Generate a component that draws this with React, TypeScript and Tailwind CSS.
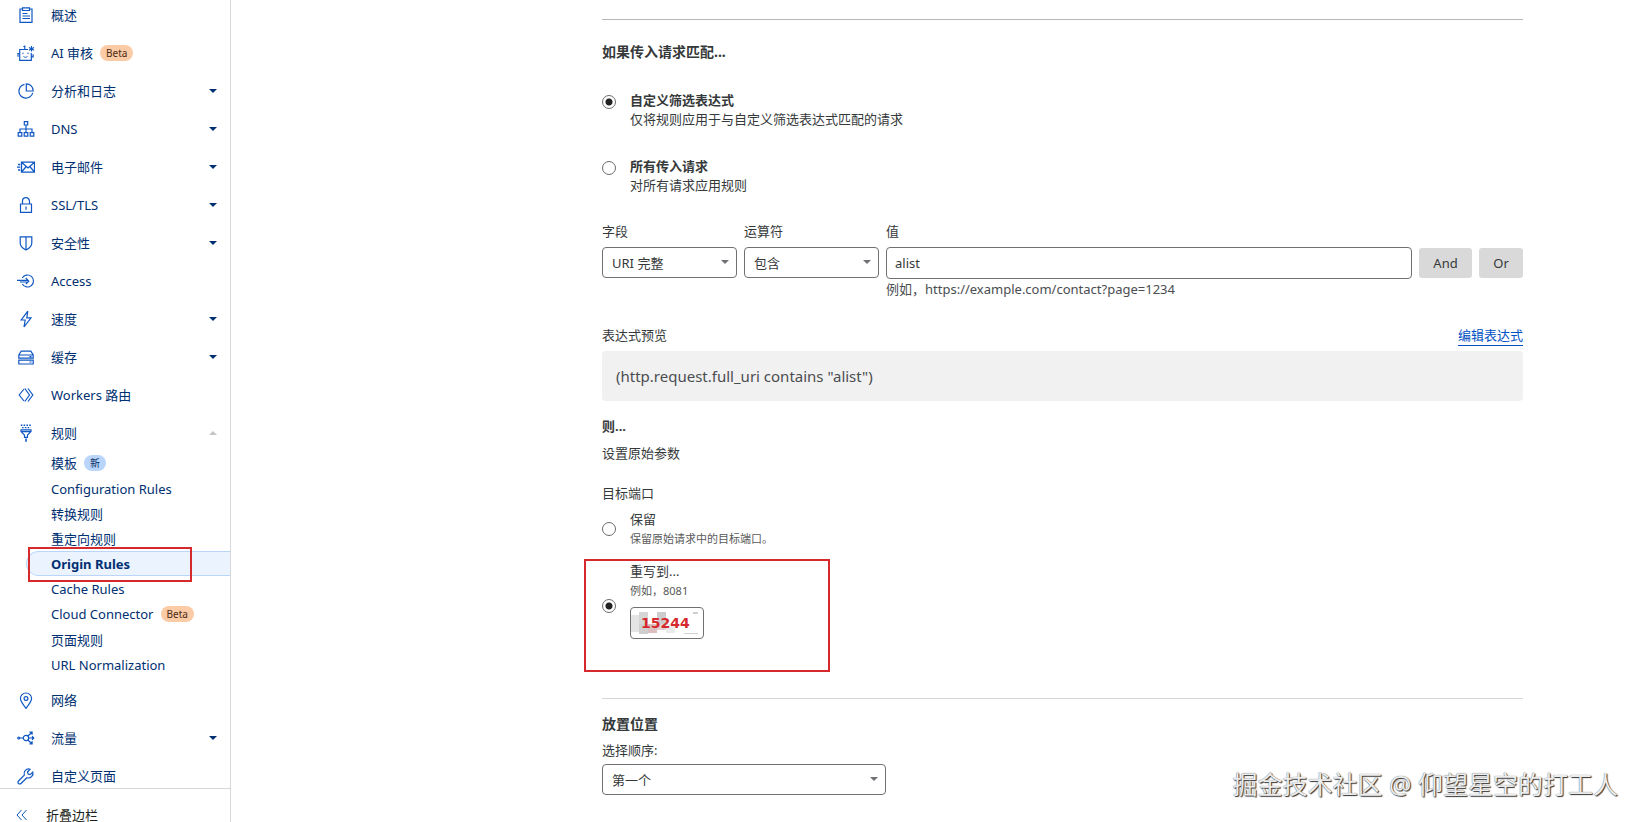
import clsx from "clsx";
import type { ReactNode } from "react";

type NavItem = {
  label: string;
  icon: ReactNode;
  badge?: string;
  caret?: "down" | "up";
};

type SubItem = {
  label: string;
  badge?: { text: string; tone: "orange" | "blue" };
  active?: boolean;
};

function Icon({ children }: { children: ReactNode }) {
  return (
    <svg
      viewBox="0 0 18 18"
      className="size-[18px] shrink-0"
      fill="none"
      stroke="#0f57c2"
      strokeWidth="1.2"
      aria-hidden="true"
    >
      {children}
    </svg>
  );
}

const topItems: NavItem[] = [
  {
    label: "概述",
    icon: (
      <Icon>
        <path d="M5.500 3H3v13.400h12V3h-2.500M5.500 1.800h7v2.700h-7zM5.500 7.500h5M5.500 10h7.500M5.500 12.500h7.500" />
      </Icon>
    ),
  },
  {
    label: "AI 审核",
    badge: "Beta",
    icon: (
      <Icon>
        <path d="M11 5.500H2.700v10.800h11.600V9M2.700 9.500H1v3.300M14.300 12.800h1.800v-2.500M7.800 5.500V1.500M6.300 2.500h1.500" />
        <path d="M6 8.600v1.500M11 8.600v1.500M6.500 12.500c1.200 1 2.800 1 4 0" strokeWidth="1" />
        <path d="M14.500 2v5.600M12 3.400l5 2.800M17 3.400l-5 2.800" strokeWidth="1.100" />
      </Icon>
    ),
  },
  {
    label: "分析和日志",
    caret: "down",
    icon: (
      <Icon>
        <path d="M7.500 2.300A7 7 0 1 0 15.700 10.800" />
        <path d="M9.300 1.800v7.200h6.900a7 7 0 0 0-6.900-7.200z" />
      </Icon>
    ),
  },
  {
    label: "DNS",
    caret: "down",
    icon: (
      <Icon>
        <path d="M7.300 1.600h3.400V5H7.300zM1.200 12.600h3.600v3.600H1.200zM7.200 12.600h3.600v3.600H7.200zM13.200 12.600h3.600v3.600h-3.600zM9 5v7.600M3 12.600V9h12v3.600" />
      </Icon>
    ),
  },
  {
    label: "电子邮件",
    caret: "down",
    icon: (
      <Icon>
        <path
          d="M4.500 4.200h13v10h-13zM4.500 4.200l6.500 5.800 6.500-5.800M4.500 14.200l4.700-5.700M17.500 14.200l-4.700-5.700M1 6.500h2.200M0 9.200h3.200M1 12h2.200"
          strokeWidth="1.300"
        />
      </Icon>
    ),
  },
  {
    label: "SSL/TLS",
    caret: "down",
    icon: (
      <Icon>
        <path d="M3.500 8h11v8.400h-11zM5.500 8V5.200a3.500 3.500 0 0 1 7 0V8M9 10.500v3.300" />
      </Icon>
    ),
  },
  {
    label: "安全性",
    caret: "down",
    icon: (
      <Icon>
        <path d="M3.200 2.800h11.600v6c0 3.600-3 6-5.800 7.200-2.800-1.200-5.800-3.600-5.800-7.200zM9 2.800V16" />
      </Icon>
    ),
  },
  {
    label: "Access",
    icon: (
      <Icon>
        <path d="M5.300 6A6 6 0 1 1 5.300 12M0 8.300h11M3 10h8M8.800 6L11.800 9.200l-3 3" />
      </Icon>
    ),
  },
  {
    label: "速度",
    caret: "down",
    icon: (
      <Icon>
        <path d="M10.800 1.200L4.200 10h4l-1.200 7 7-9.200H9.800z" />
      </Icon>
    ),
  },
  {
    label: "缓存",
    caret: "down",
    icon: (
      <Icon>
        <path d="M1.800 7L4.200 3.200h9.600L16.200 7v3.200H1.800zM1.800 7h14.400M1.800 12.200h14.400v3.800H1.800zM12.500 14h2M12.500 8.600h2" />
      </Icon>
    ),
  },
  {
    label: "Workers 路由",
    icon: (
      <Icon>
        <path d="M7 3L2.200 9 7 15M7.800 2.500L12.500 9l-4.700 6.500M11 2.500L15.800 9 11 15.500" />
      </Icon>
    ),
  },
  {
    label: "规则",
    caret: "up",
    icon: (
      <Icon>
        <path d="M3.800 1.300h11M5 3.600h8.500" strokeDasharray="1.600 1.200" strokeWidth="1.400" />
        <path d="M4 5.800h10v1.800L10.500 11v2.300h-3V11L4 7.600zM4 7.600h10" />
        <path d="M9 14.500v3.200" strokeWidth="1.600" />
      </Icon>
    ),
  },
];

const subItems: SubItem[] = [
  { label: "模板", badge: { text: "新", tone: "blue" } },
  { label: "Configuration Rules" },
  { label: "转换规则" },
  { label: "重定向规则" },
  { label: "Origin Rules", active: true },
  { label: "Cache Rules" },
  { label: "Cloud Connector", badge: { text: "Beta", tone: "orange" } },
  { label: "页面规则" },
  { label: "URL Normalization" },
];

const bottomItems: NavItem[] = [
  {
    label: "网络",
    icon: (
      <Icon>
        <path d="M9 17.300C5.500 13 3.400 10.300 3.400 7.600a5.600 5.600 0 0 1 11.200 0c0 2.700-2.100 5.400-5.600 9.700z" />
        <circle cx="9" cy="7.500" r="1.900" />
      </Icon>
    ),
  },
  {
    label: "流量",
    caret: "down",
    icon: (
      <Icon>
        <circle cx="9" cy="9" r="2.700" />
        <path d="M2 9h4.300M11.700 9H16M10.800 7l4-3.500M10.800 11l4 3.500M12.500 3.200h2.600v2.600M12.500 14.800h2.600v-2.600M15 7.300L16.800 9 15 10.700" />
        <circle cx="1.700" cy="9" r="1" />
      </Icon>
    ),
  },
  {
    label: "自定义页面",
    icon: (
      <Icon>
        <path d="M13 2.200a4.600 4.600 0 0 0-5.700 5.900L1.500 14a1.700 1.700 0 0 0 2.500 2.500l5.900-5.800A4.600 4.600 0 0 0 15.800 5l-2.700 2.600-2-.6-.6-2z" />
      </Icon>
    ),
  },
];

function Badge({ text, tone }: { text: string; tone: "orange" | "blue" }) {
  return (
    <span
      className={clsx(
        "flex h-4 items-center rounded-full px-1.5 text-[10px]",
        tone === "orange"
          ? "bg-[#fbcba5] text-[#4a2a14]"
          : "bg-[#b9d6fa] text-[#0b2e66]",
      )}
    >
      {text}
    </span>
  );
}

function Caret({ className }: { className?: string }) {
  return (
    <svg viewBox="0 0 8 4" className={clsx("h-1 w-2", className)} aria-hidden="true">
      <path d="M0 0h8L4 4z" fill="currentColor" />
    </svg>
  );
}

function NavRow({ item }: { item: NavItem }) {
  return (
    <li>
      <a href="#" className="flex h-[38px] items-center pr-[13px] pl-[17px]">
        {item.icon}
        <span className="ml-4">{item.label}</span>
        {item.badge && (
          <span className="ml-[7px]">
            <Badge text={item.badge} tone="orange" />
          </span>
        )}
        {item.caret && (
          <Caret
            className={clsx(
              "ml-auto",
              item.caret === "up" && "rotate-180 text-[#c4c4c4]",
            )}
          />
        )}
      </a>
    </li>
  );
}

function SubRow({ item }: { item: SubItem }) {
  return (
    <li className={clsx("relative pl-[26px]", item.badge ? "h-[26px]" : "h-[25px]")}>
      <a
        href="#"
        className={clsx(
          "flex h-full items-center gap-[7px] rounded-l-full border border-r-0 pl-6",
          item.active
            ? "border-[#b9d6fa] bg-[#ebf3fe] font-bold"
            : "border-transparent",
        )}
      >
        {item.label}
        {item.badge && <Badge {...item.badge} />}
      </a>
      {item.active && (
        <span className="pointer-events-none absolute -top-1 left-7 h-[35px] w-[164px] border-2 border-[#d5292d]" />
      )}
    </li>
  );
}

function Sidebar() {
  return (
    <aside className="flex w-[231px] shrink-0 flex-col border-r border-[#d5d7d8] text-[#003072]">
      <nav className="min-h-0 flex-1 overflow-hidden">
        <ul className="-mt-1">
          {topItems.map((item) => (
            <NavRow key={item.label} item={item} />
          ))}
          <li>
            <ul className="-mt-[2px] mb-1">
              {subItems.map((item) => (
                <SubRow key={item.label} item={item} />
              ))}
            </ul>
          </li>
          {bottomItems.map((item) => (
            <NavRow key={item.label} item={item} />
          ))}
        </ul>
      </nav>
      <button
        type="button"
        className="flex h-[34px] shrink-0 items-end gap-[18px] border-t border-[#d5d7d8] pl-4 leading-[14px] text-[#1d1f20]"
      >
        <svg
          viewBox="0 0 12 12"
          className="mb-px size-3"
          fill="none"
          stroke="#0f57c2"
          aria-hidden="true"
        >
          <path d="M5.500 1L1 6l4.500 5M10.500 1L6 6l4.500 5" />
        </svg>
        折叠边栏
      </button>
    </aside>
  );
}

function Radio({
  id,
  name,
  checked,
  className,
}: {
  id: string;
  name: string;
  checked?: boolean;
  className?: string;
}) {
  return (
    <input
      type="radio"
      id={id}
      name={name}
      defaultChecked={checked}
      className={clsx(
        "size-[14px] shrink-0 appearance-none rounded-full border border-[#6b6b6b] bg-white checked:bg-[radial-gradient(circle,#222_0_3px,#fff_4px)]",
        className,
      )}
    />
  );
}

function Select({ id, options }: { id: string; options: string[] }) {
  return (
    <div className="relative">
      <select
        id={id}
        className="block h-[31px] w-full appearance-none rounded border border-[#6f7073] bg-white pr-6 pl-[9px]"
      >
        {options.map((option) => (
          <option key={option}>{option}</option>
        ))}
      </select>
      <Caret className="pointer-events-none absolute top-[13px] right-2 text-[#6f7073]" />
    </div>
  );
}

function MatchOption({
  id,
  title,
  description,
  checked,
}: {
  id: string;
  title: string;
  description: string;
  checked?: boolean;
}) {
  return (
    <div className="flex items-start gap-[14px] pt-1">
      <Radio id={id} name="match" checked={checked} />
      <label htmlFor={id} className="-mt-1 leading-[19px]">
        <strong className="block">{title}</strong>
        {description}
      </label>
    </div>
  );
}

function ExpressionBuilder() {
  return (
    <div className="flex items-start gap-[7px]">
      <div className="w-[135px]">
        <label htmlFor="field" className="mb-[6px] block">
          字段
        </label>
        <Select id="field" options={["URI 完整"]} />
      </div>
      <div className="w-[135px]">
        <label htmlFor="operator" className="mb-[6px] block">
          运算符
        </label>
        <Select id="operator" options={["包含"]} />
      </div>
      <div className="min-w-0 flex-1">
        <label htmlFor="value" className="mb-[6px] block">
          值
        </label>
        <input
          id="value"
          defaultValue="alist"
          className="block h-8 w-full rounded border border-[#6f7073] px-2"
        />
        <p className="text-[#4a4d50]">例如，https://example.com/contact?page=1234</p>
      </div>
      <button type="button" className="mt-[27px] h-[30px] w-[53px] rounded-[3px] bg-[#d9d9d9]">
        And
      </button>
      <button type="button" className="mt-[27px] h-[30px] w-11 rounded-[3px] bg-[#d9d9d9]">
        Or
      </button>
    </div>
  );
}

function PortInput() {
  return (
    <div className="relative h-8 w-[74px]">
      <input
        id="port"
        aria-label="重写到..."
        defaultValue="15244"
        className="block size-full rounded border border-[#6f7073] bg-transparent pl-[10px] font-['DejaVu_Sans',sans-serif] text-sm font-bold text-[#d5292d]"
      />
      <svg
        viewBox="0 0 74 32"
        className="pointer-events-none absolute inset-0 -z-10 size-full"
        aria-hidden="true"
      >
        <path d="M0 8h9v17H0z" fill="#e4e4e4" />
        <path d="M9 5h9v12H9z" fill="#d6d6d6" />
        <path d="M9 17h9v10H9z" fill="#cfcfcf" />
        <path d="M18 17h9v9h-9z" fill="#dcc0bf" />
        <path d="M27 5h9v12h-9z" fill="#cdcdcd" />
        <path d="M27 17h9v6h-9z" fill="#e0d2d2" />
        <path d="M36 17h9v9h-9z" fill="#ebebeb" />
        <path d="M54 26h14v1H54zM63 5h5v2h-5z" fill="#cfcfcf" />
      </svg>
    </div>
  );
}

export default function App() {
  return (
    <div className="relative isolate flex h-screen overflow-hidden bg-white font-['Noto_Sans','Noto_Sans_CJK_SC',sans-serif] text-[13px] leading-5 text-[#36393a]">
      <Sidebar />
      <main className="min-w-0 flex-1 pt-[19px] pr-[119px] pl-[371px]">
        <hr className="border-[#b6b7b8]" />

        <h2 className="mt-[22px] text-sm font-bold">如果传入请求匹配...</h2>
        <div className="mt-[29px] space-y-7">
          <MatchOption
            id="match-custom"
            title="自定义筛选表达式"
            description="仅将规则应用于与自定义筛选表达式匹配的请求"
            checked
          />
          <MatchOption
            id="match-all"
            title="所有传入请求"
            description="对所有请求应用规则"
          />
        </div>

        <div className="mt-[26px]">
          <ExpressionBuilder />
        </div>

        <div className="mt-[26px] flex items-start justify-between">
          <span>表达式预览</span>
          <a href="#" className="border-b border-[#0051c3] text-[#0051c3]">
            编辑表达式
          </a>
        </div>
        <pre className="mt-[5px] rounded bg-[#f1f1f1] px-[14px] py-[15px] font-[inherit] text-[15px] leading-5 text-[#4a4d50]">
          (http.request.full_uri contains "alist")
        </pre>

        <h2 className="mt-[15px] font-bold">则...</h2>
        <p className="mt-[7px]">设置原始参数</p>

        <fieldset className="mt-5">
          <legend>目标端口</legend>
          <div className="mt-[6px] flex items-center gap-[14px]">
            <Radio id="port-keep" name="port" />
            <label htmlFor="port-keep">
              <span className="block">保留</span>
              <span className="block text-[11px] text-[#595959]">
                保留原始请求中的目标端口。
              </span>
            </label>
          </div>
          <div className="relative mt-3 flex items-center gap-[14px]">
            <Radio id="port-rewrite" name="port" checked className="mt-3" />
            <div>
              <label htmlFor="port-rewrite" className="mb-[6px] block">
                <span className="block">重写到...</span>
                <span className="block text-[11px] text-[#595959]">例如，8081</span>
              </label>
              <PortInput />
            </div>
            <span className="pointer-events-none absolute -top-[2px] -left-[18px] h-[113px] w-[246px] border-2 border-[#d5292d]" />
          </div>
        </fieldset>

        <hr className="mt-[59px] border-[#d5d7d8]" />
        <h2 className="mt-[15px] text-sm font-bold">放置位置</h2>
        <div className="mt-[6px] w-[284px]">
          <label htmlFor="order" className="mb-1 block">
            选择顺序:
          </label>
          <Select id="order" options={["第一个"]} />
        </div>
      </main>

      <div className="pointer-events-none absolute right-6 bottom-[22px] text-[25px] leading-8 text-[#ececec] [text-shadow:1px_1px_1px_#333,0_0_1px_#555]">
        掘金技术社区 @ 仰望星空的打工人
      </div>
    </div>
  );
}
